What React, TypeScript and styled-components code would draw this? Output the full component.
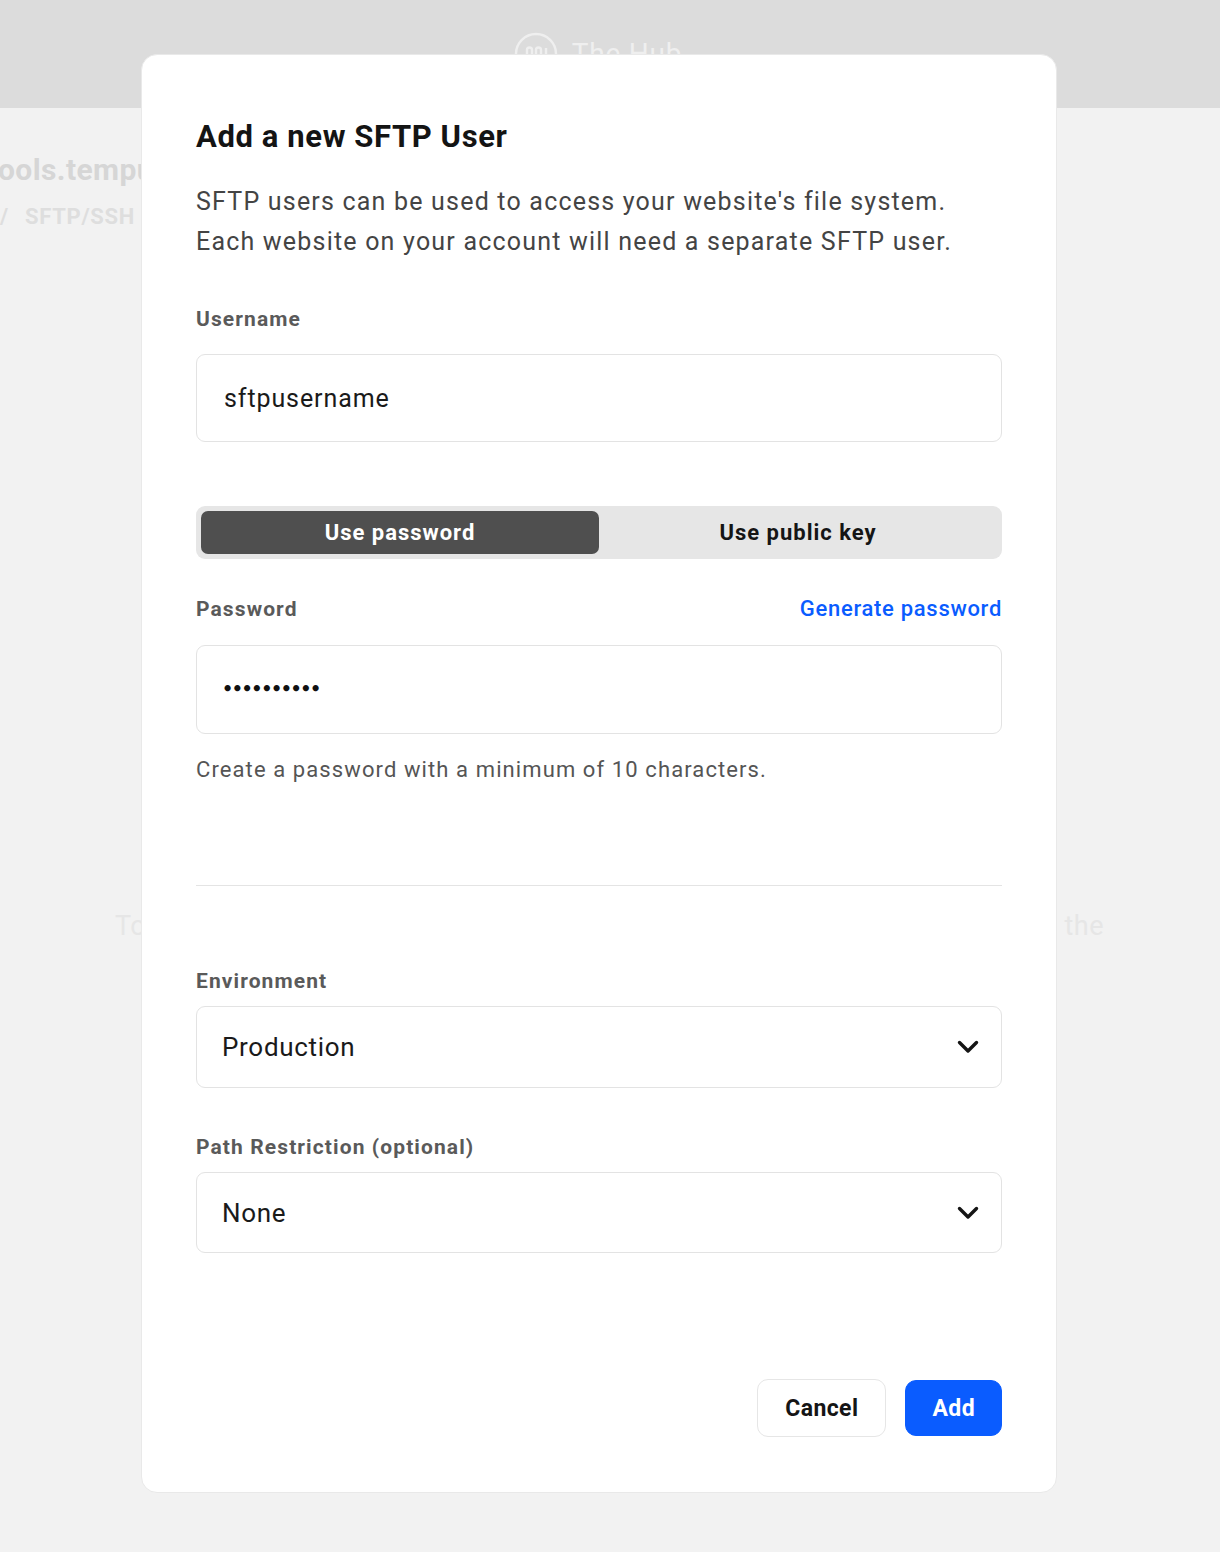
import React from "react";
import styled, { createGlobalStyle } from "styled-components";

const Global = createGlobalStyle`
  * { box-sizing: border-box; }
  html, body { margin: 0; padding: 0; }
  body {
    background: #f2f2f2;
    font-family: Roboto, "Liberation Sans", Arial, sans-serif;
    min-height: 1552px;
    overflow: hidden;
  }
`;

const Page = styled.div`
  position: relative;
  width: 1220px;
  height: 1552px;
  overflow: hidden;
`;

const Header = styled.header`
  height: 108px;
  background: #dcdcdc;
  display: flex;
  justify-content: center;
  padding-top: 30px;
`;

const Logo = styled.div`
  display: flex;
  align-items: flex-start;
  gap: 12px;
  color: #efefef;
  font-size: 28px;
  margin-left: -26px;
`;

const LogoText = styled.span`
  line-height: 1;
  margin-top: 10px;
  letter-spacing: 0.8px;
`;

const BgContent = styled.div`
  display: flex;
  flex-direction: column;
`;

const BgTitle = styled.div`
  margin-top: 44px;
  margin-left: -2px;
  font-size: 30px;
  font-weight: 700;
  color: #d6d6d6;
  white-space: nowrap;
  line-height: 36px;
  letter-spacing: 0.4px;
`;

const BgCrumb = styled.div`
  margin-top: 16px;
  font-size: 22px;
  font-weight: 700;
  color: #dedede;
  white-space: nowrap;
  line-height: 26px;
  word-spacing: 10px;
  letter-spacing: 0.7px;
`;

const BgRow = styled.div`
  margin-top: 679px;
  display: flex;
  justify-content: space-between;
  padding: 0 116px 0 115px;
  font-size: 27px;
  color: #e6e6e6;
  line-height: 34px;
  letter-spacing: 0.5px;
`;

const Modal = styled.div`
  position: absolute;
  left: 141px;
  top: 54px;
  width: 916px;
  height: 1439px;
  background: #fff;
  border: 1px solid #e9e9e9;
  border-radius: 16px;
  padding: 62px 54px 55px 54px;
  display: flex;
  flex-direction: column;
`;

const Title = styled.h2`
  margin: 0;
  font-size: 31px;
  font-weight: 700;
  color: #141414;
  line-height: 40px;
  letter-spacing: 0.6px;
`;

const Desc = styled.p`
  margin: 25px 0 0 0;
  font-size: 25px;
  line-height: 39.5px;
  color: #444;
  letter-spacing: 1.2px;
`;

const Label = styled.div<{ $top: number; $gap: number }>`
  margin-top: ${(p) => p.$top}px;
  margin-bottom: ${(p) => p.$gap}px;
  font-size: 21px;
  line-height: 28px;
  font-weight: 700;
  color: #5a5a5a;
  letter-spacing: 1.1px;
`;

const LabelRow = styled.div`
  margin-top: 36px;
  margin-bottom: 22px;
  display: flex;
  justify-content: space-between;
  align-items: center;
  line-height: 28px;
`;

const LabelText = styled.span`
  font-size: 21px;
  font-weight: 700;
  color: #5a5a5a;
  letter-spacing: 1.1px;
`;

const Link = styled.a`
  font-size: 22px;
  font-weight: 500;
  color: #0a5cff;
  text-decoration: none;
  letter-spacing: 0.7px;
`;

const Field = styled.div<{ $h: number; $pad: number; $size: number; $ls: number }>`
  height: ${(p) => p.$h}px;
  border: 1px solid #e3e3e3;
  border-radius: 9px;
  display: flex;
  align-items: center;
  justify-content: space-between;
  padding: 0 22px 0 ${(p) => p.$pad}px;
  font-size: ${(p) => p.$size}px;
  color: #1a1a1a;
  letter-spacing: ${(p) => p.$ls}px;
`;

const Dots = styled.span`
  font-size: 17.5px;
  letter-spacing: -1.4px;
  color: #111;
  font-family: "DejaVu Sans", sans-serif;
  font-weight: 700;
  margin-top: -2px;
`;

const Toggle = styled.div`
  margin-top: 64px;
  height: 53px;
  background: #e6e6e6;
  border-radius: 9px;
  padding: 5px;
  display: grid;
  grid-template-columns: 1fr 1fr;
`;

const Tab = styled.div<{ $active?: boolean }>`
  display: flex;
  align-items: center;
  justify-content: center;
  border-radius: 7px;
  background: ${(p) => (p.$active ? "#4f4f4f" : "transparent")};
  color: ${(p) => (p.$active ? "#fff" : "#151515")};
  font-size: 22px;
  font-weight: 700;
  letter-spacing: 1px;
`;

const Hint = styled.div`
  margin-top: 21px;
  font-size: 22px;
  line-height: 30px;
  color: #555;
  letter-spacing: 1.1px;
`;

const Divider = styled.hr`
  margin: 100px 0 0 0;
  border: none;
  border-top: 1px solid #e4e4e4;
  height: 0;
`;

const Footer = styled.div`
  margin-top: auto;
  display: flex;
  justify-content: flex-end;
  gap: 19px;
`;

const Button = styled.button<{ $primary?: boolean }>`
  height: ${(p) => (p.$primary ? 56 : 58)}px;
  margin-top: ${(p) => (p.$primary ? 1 : 0)}px;
  padding: 0 ${(p) => (p.$primary ? 26 : 27)}px;
  border-radius: 11px;
  border: 1px solid ${(p) => (p.$primary ? "#0a5cff" : "#e6e6e6")};
  background: ${(p) => (p.$primary ? "#0a5cff" : "#fff")};
  color: ${(p) => (p.$primary ? "#fff" : "#151515")};
  font-family: Roboto, "Liberation Sans", Arial, sans-serif;
  font-size: 23px;
  font-weight: 700;
  letter-spacing: 0.4px;
`;

const Chevron = () => (
  <svg width="22" height="14" viewBox="0 0 22 14" fill="none">
    <path d="M2.5 2.5 L11 11 L19.5 2.5" stroke="#151515" strokeWidth="3.4" strokeLinecap="round" strokeLinejoin="round" />
  </svg>
);

const HubIcon = () => (
  <svg width="48" height="40" viewBox="0 0 48 40" fill="none" stroke="#efefef" strokeWidth="2.4">
    <path d="M4 40 V24 A20 20 0 0 1 44 24 V40" />
    <path d="M15 40 V20 a2.5 2.5 0 0 1 5 0 V40" />
    <path d="M24 40 V20 a2.5 2.5 0 0 1 5 0 V40" />
    <path d="M34 40 V18" />
  </svg>
);

export default function App() {
  return (
    <Page>
      <Global />
      <Header>
        <Logo>
          <HubIcon />
          <LogoText>The Hub</LogoText>
        </Logo>
      </Header>
      <BgContent>
        <BgTitle>ools.tempurl.host</BgTitle>
        <BgCrumb>/ SFTP/SSH</BgCrumb>
        <BgRow>
          <span>To</span>
          <span>the</span>
        </BgRow>
      </BgContent>
      <Modal>
        <Title>Add a new SFTP User</Title>
        <Desc>
          SFTP users can be used to access your website's file system.
          <br />
          Each website on your account will need a separate SFTP user.
        </Desc>
        <Label $top={44} $gap={21}>Username</Label>
        <Field $h={88} $pad={27} $size={25} $ls={0.9}>sftpusername</Field>
        <Toggle>
          <Tab $active>Use password</Tab>
          <Tab>Use public key</Tab>
        </Toggle>
        <LabelRow>
          <LabelText>Password</LabelText>
          <Link href="#">Generate password</Link>
        </LabelRow>
        <Field $h={89} $pad={25} $size={25} $ls={0}>
          <Dots>••••••••••</Dots>
        </Field>
        <Hint>Create a password with a minimum of 10 characters.</Hint>
        <Divider />
        <Label $top={81} $gap={11}>Environment</Label>
        <Field $h={82} $pad={25} $size={26} $ls={0.7}>
          <span>Production</span>
          <Chevron />
        </Field>
        <Label $top={45} $gap={11}>Path Restriction (optional)</Label>
        <Field $h={81} $pad={25} $size={26} $ls={0.7}>
          <span>None</span>
          <Chevron />
        </Field>
        <Footer>
          <Button>Cancel</Button>
          <Button $primary>Add</Button>
        </Footer>
      </Modal>
    </Page>
  );
}
